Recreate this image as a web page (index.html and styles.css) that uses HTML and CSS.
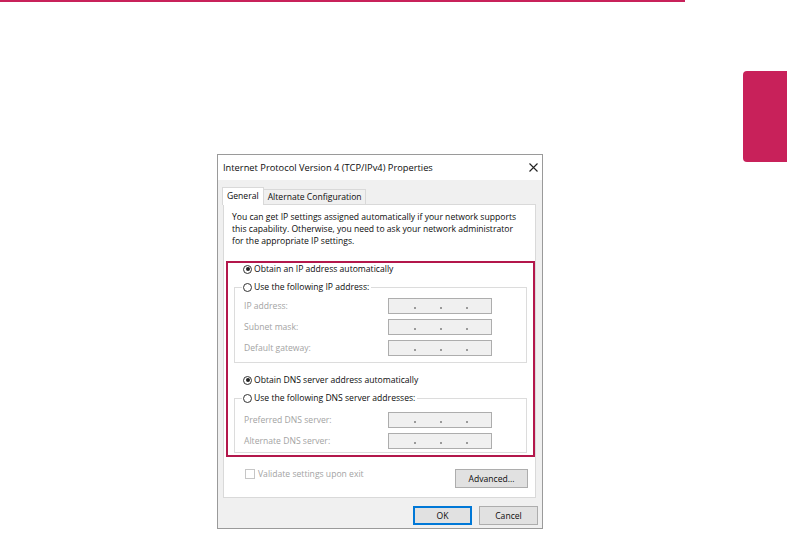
FILE: index.html
```html
<!DOCTYPE html>
<html lang="en">
<head>
  <meta charset="UTF-8">
  <meta name="viewport" content="width=device-width,initial-scale=1.0">
  <title>TCP/IPv4 Properties</title>
  <link rel="stylesheet" href="styles.css">
</head>
<body>
  <div class="page">
    <div class="content">
      <div class="topline"></div>

      <!-- ダイアログ -->
      <div class="dialog">
        <div class="titlebar">
          <span class="title">Internet Protocol Version 4 (TCP/IPv4) Properties</span>
          <svg class="close" width="9" height="9" viewBox="0 0 9 9">
            <path d="M0.5 0.5L8.5 8.5M8.5 0.5L0.5 8.5" stroke="#222" stroke-width="1.1" fill="none"/>
          </svg>
        </div>

        <div class="tabs">
          <div class="tab active">General</div>
          <div class="tab">Alternate Configuration</div>
        </div>

        <div class="panel">
          <p class="intro">You can get IP settings assigned automatically if your network supports<br>this capability. Otherwise, you need to ask your network administrator<br>for the appropriate IP settings.</p>

          <div class="highlight">
            <div class="option"><span class="radio checked"></span>Obtain an IP address automatically</div>
            <fieldset class="group">
              <legend class="option"><span class="radio"></span>Use the following IP address:</legend>
              <div class="field"><span class="label">IP address:</span><span class="ipbox"><i></i><i></i><i></i></span></div>
              <div class="field"><span class="label">Subnet mask:</span><span class="ipbox"><i></i><i></i><i></i></span></div>
              <div class="field"><span class="label">Default gateway:</span><span class="ipbox"><i></i><i></i><i></i></span></div>
            </fieldset>

            <div class="option dns"><span class="radio checked"></span>Obtain DNS server address automatically</div>
            <fieldset class="group last">
              <legend class="option"><span class="radio"></span>Use the following DNS server addresses:</legend>
              <div class="field"><span class="label">Preferred DNS server:</span><span class="ipbox"><i></i><i></i><i></i></span></div>
              <div class="field"><span class="label">Alternate DNS server:</span><span class="ipbox"><i></i><i></i><i></i></span></div>
            </fieldset>
          </div>

          <div class="panel-foot">
            <span class="check"><span class="box"></span>Validate settings upon exit</span>
            <button class="btn advanced">Advanced...</button>
          </div>
        </div>

        <div class="actions">
          <button class="btn primary">OK</button>
          <button class="btn">Cancel</button>
        </div>
      </div>
    </div>

    <div class="chapter-tab"></div>
  </div>
</body>
</html>
```

FILE: styles.css
```css
/* ——— ページ全体 ——— */
:root {
  --accent: #c8215a;
  --mark: #b3174b;
  --win: #f0f0f0;
  --line: #d9d9d9;
  --btn: #e1e1e1;
  --btn-border: #adadad;
  --disabled: #a3a3a3;
}
body {
  margin:0; background:#fff; color:#111;
  font-family:"Open Sans","Noto Sans",sans-serif;
}
.page { display:flex; }
.content { width:685px; }
.topline { height:2px; background:var(--accent); }
.chapter-tab {
  margin:71px 0 0 auto; width:44px; height:91px;
  background:var(--accent); border-radius:4px 0 0 4px;
}

/* ——— ダイアログ ——— */
.dialog {
  width:326px; box-sizing:border-box;
  margin:152px 0 0 217px;
  background:var(--win); border:1px solid #9a9a9a;
  font-size:8.6px; line-height:12px; color:#0c0c0c;
}
.titlebar {
  height:25px; background:#fff;
  display:flex; align-items:center; justify-content:space-between;
  padding:0 4px 0 5px;
}
.title { font-size:9.3px; }
.close { display:block; }

.tabs { display:flex; align-items:flex-end; padding:7px 0 0 4px; }
.tab {
  height:14px; line-height:14px; padding:0 3px 0 4px;
  border:1px solid var(--line); border-bottom:none; border-left:none;
  background:var(--win); font-size:8.6px;
}
.tab.active {
  height:17px; line-height:16px; padding:0 4px 0 4px;
  border-left:1px solid var(--line);
  background:#fff; margin-bottom:-1px; position:relative;
}

.panel {
  margin:0 6px 0 5px; background:#fff;
  border:1px solid var(--line);
}
.intro { margin:0; padding:6px 0 0 8px; }

/* ——— 赤枠 ——— */
.highlight {
  margin:14px 0 0 2px;
  border:2px solid var(--mark);
}
.option {
  display:flex; align-items:center; gap:2px;
  height:12px; padding-left:15px;
}
.radio {
  width:9px; height:9px; box-sizing:border-box;
  border:1px solid #333; border-radius:50%;
  background:#fff; position:relative;
}
.radio.checked::after {
  content:""; position:absolute; inset:1.5px;
  background:#222; border-radius:50%;
}
.group {
  margin:6px 6px 0 6px; padding:5px 0 6px 7px;
  border:1px solid #dcdcdc;
}
.group legend.option { padding:0 2px 0 1px; }
.field { display:flex; align-items:center; height:16px; }
.field + .field { margin-top:5px; }
.label { width:144px; padding-left:2px; color:var(--disabled); }
.ipbox {
  width:104px; height:16px; box-sizing:border-box;
  background:var(--win); border:1px solid var(--btn-border);
  display:flex; align-items:flex-end; gap:24px;
  padding:0 0 4px 25px;
}
.ipbox i { width:2px; height:2px; background:#9a9a9a; }
.option.dns { margin-top:11px; padding-left:15px; }
.group.last { margin-top:6px; margin-bottom:2px; padding-top:8px; padding-bottom:3px; }

/* ——— 下部 ——— */
.panel-foot {
  display:flex; justify-content:space-between; align-items:flex-start;
  margin-top:12px; padding:0 7px 9px 21px;
}
.check {
  display:flex; align-items:center; gap:3px;
  height:10px; color:var(--disabled);
}
.box {
  width:10px; height:10px; box-sizing:border-box;
  border:1px solid #c6c6c6; background:#fff;
}
.btn {
  font-family:inherit; font-size:8.6px; color:#0c0c0c;
  background:var(--btn); border:1px solid var(--btn-border);
  padding:0; margin:0; cursor:pointer;
}
.btn.advanced { width:73px; height:19px; }
.actions {
  display:flex; justify-content:flex-end; gap:7px;
  padding:8px 4px 3px 0;
}
.actions .btn { width:59px; height:19px; }
.btn.primary { border:1px solid #0078d7; box-shadow:inset 0 0 0 1px #0078d7; }
```
